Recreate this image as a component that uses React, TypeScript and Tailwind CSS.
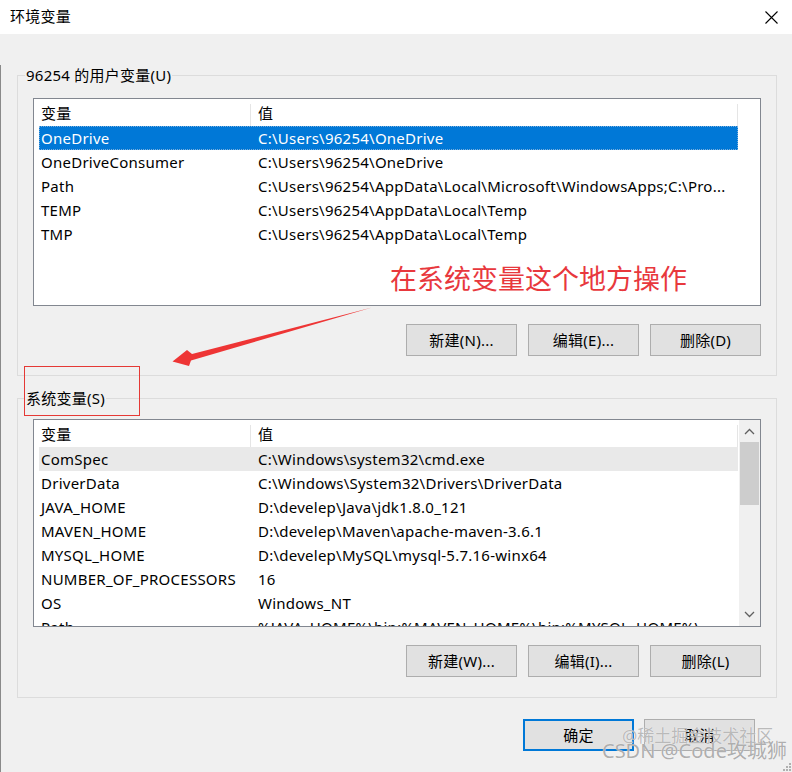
import React from "react";

const FONT = { fontFamily: "'Noto Sans', 'Noto Sans CJK SC', sans-serif" };

type Row = [string, string];

const userRows: Row[] = [
  ["OneDrive", "C:\\Users\\96254\\OneDrive"],
  ["OneDriveConsumer", "C:\\Users\\96254\\OneDrive"],
  ["Path", "C:\\Users\\96254\\AppData\\Local\\Microsoft\\WindowsApps;C:\\Pro..."],
  ["TEMP", "C:\\Users\\96254\\AppData\\Local\\Temp"],
  ["TMP", "C:\\Users\\96254\\AppData\\Local\\Temp"],
];

const sysRows: Row[] = [
  ["ComSpec", "C:\\Windows\\system32\\cmd.exe"],
  ["DriverData", "C:\\Windows\\System32\\Drivers\\DriverData"],
  ["JAVA_HOME", "D:\\develep\\Java\\jdk1.8.0_121"],
  ["MAVEN_HOME", "D:\\develep\\Maven\\apache-maven-3.6.1"],
  ["MYSQL_HOME", "D:\\develep\\MySQL\\mysql-5.7.16-winx64"],
  ["NUMBER_OF_PROCESSORS", "16"],
  ["OS", "Windows_NT"],
  ["Path", "%JAVA_HOME%\\bin;%MAVEN_HOME%\\bin;%MYSQL_HOME%\\..."],
];

function ListView({
  rows,
  selected,
  hovered,
  scrollbar,
}: {
  rows: Row[];
  selected?: number;
  hovered?: number;
  scrollbar?: boolean;
}) {
  return (
    <div className="flex h-[208px] border border-[#828790] bg-white overflow-hidden">
      <div className="flex-1 pl-[5px] pr-[1px] overflow-hidden">
        <div className="flex h-[27px] items-start pt-[5px] text-[15px] leading-[18px] text-black">
          <div className="w-[212px] h-[22px] shrink-0 border-r border-[#e5e5e5] pl-[2px]">变量</div>
          <div className="flex-1 h-[22px] border-r border-[#e5e5e5] pl-[7px]">值</div>
        </div>
        {rows.map((r, i) => {
          const sel = i === selected;
          const hov = i === hovered;
          return (
            <div
              key={i}
              className={
                "flex h-[24px] items-center text-[15px] whitespace-nowrap " +
                (sel
                  ? "bg-[#0078d7] text-white outline-1 outline-dotted outline-[#7aaedc] -outline-offset-1"
                  : hov
                  ? "bg-[#e9e9e9] text-black"
                  : "text-black")
              }
            >
              <div className="w-[212px] shrink-0 pl-[2px] overflow-hidden">{r[0]}</div>
              <div className="flex-1 pl-[7px] overflow-hidden">{r[1]}</div>
            </div>
          );
        })}
      </div>
      {scrollbar ? (
        <div className="w-[21px] shrink-0 bg-[#f0f0f0] flex flex-col items-center">
          <div className="h-[22px] w-full flex items-center justify-center">
            <svg width="11" height="7" viewBox="0 0 11 7">
              <path d="M1 6 L5.5 1.5 L10 6" fill="none" stroke="#606060" strokeWidth="1.3" />
            </svg>
          </div>
          <div className="w-[19px] h-[63px] bg-[#cdcdcd]" />
          <div className="flex-1" />
          <div className="h-[24px] w-full flex items-center justify-center">
            <svg width="11" height="7" viewBox="0 0 11 7">
              <path d="M1 1 L5.5 5.5 L10 1" fill="none" stroke="#606060" strokeWidth="1.3" />
            </svg>
          </div>
        </div>
      ) : (
        <div className="w-[21px] shrink-0" />
      )}
    </div>
  );
}

function Btn({ label, primary }: { label: string; primary?: boolean }) {
  return (
    <div
      className={
        "w-[111px] h-[32px] flex items-center justify-center text-[15px] text-black bg-[#e1e1e1] " +
        (primary ? "border-2 border-[#0078d7]" : "border border-[#adadad]")
      }
    >
      {label}
    </div>
  );
}

export default function App() {
  return (
    <div className="relative w-[792px] h-[772px] overflow-hidden bg-[#f0f0f0] tracking-[0.25px]" style={FONT}>
      {/* Title bar */}
      <div className="h-[34px] bg-white flex items-center justify-between pl-[10px] pr-[14px]">
        <span className="text-[15px] text-black leading-none pb-[1px]">环境变量</span>
        <svg width="13" height="13" viewBox="0 0 13 13">
          <path d="M0.5 0.5 L12.5 12.5 M12.5 0.5 L0.5 12.5" stroke="#000" strokeWidth="1.1" />
        </svg>
      </div>

      {/* Body */}
      <div className="h-[738px] border-l border-[#8a8a8a] pl-[16px] pr-[15px]">
        <fieldset className="mt-[31px] border border-[#dcdcdc] px-[15px] pb-[19px]">
          <legend className="-ml-[8px] px-[1px] text-[15px] leading-[20px] text-black">96254 的用户变量(U)</legend>
          <div className="mt-[13px]">
            <ListView rows={userRows} selected={0} />
          </div>
          <div className="mt-[18px] flex justify-end gap-[11px]">
            <Btn label="新建(N)..." />
            <Btn label="编辑(E)..." />
            <Btn label="删除(D)" />
          </div>
        </fieldset>

        <fieldset className="mt-[12px] border border-[#dcdcdc] px-[15px] pb-[20px]">
          <legend className="-ml-[8px] px-[1px] text-[15px] leading-[20px] text-black">系统变量(S)</legend>
          <div className="mt-[11px]">
            <ListView rows={sysRows} hovered={0} scrollbar />
          </div>
          <div className="mt-[18px] flex justify-end gap-[11px]">
            <Btn label="新建(W)..." />
            <Btn label="编辑(I)..." />
            <Btn label="删除(L)" />
          </div>
        </fieldset>

        <div className="mt-[21px] flex justify-end gap-[10px] pr-[22px]">
          <Btn label="确定" primary />
          <Btn label="取消" />
        </div>
      </div>

      {/* Annotations */}
      <div className="absolute left-[390px] top-[262px] text-[27px] leading-[34px] tracking-normal text-[#e8383d] whitespace-nowrap">
        在系统变量这个地方操作
      </div>
      <svg className="absolute left-0 top-0" width="792" height="772" viewBox="0 0 792 772">
        <polygon
          points="372,307.5 192,354 187,350 172.5,361.5 189,366 191,360.5"
          fill="#ee3535"
        />
      </svg>
      <div className="absolute left-[24px] top-[366px] w-[116px] h-[50px] border border-[#e53935]" />

      {/* Watermark */}
      <div className="absolute left-[622px] top-[725px] text-[17px] leading-[22px] tracking-normal text-[#a8a8a8]/80 whitespace-nowrap [text-shadow:0_0_1px_#fff]">
        @稀土掘金技术社区
      </div>
      <div className="absolute left-[602px] top-[739px] text-[20px] leading-[24px] tracking-normal text-[#999999]/80 whitespace-nowrap [text-shadow:0_0_1px_#fff]">
        CSDN @Code攻城狮
      </div>

      {/* Size grip */}
      <svg className="absolute right-0 bottom-0" width="12" height="12" viewBox="0 0 12 12">
        {[
          [9, 3],
          [9, 6],
          [6, 6],
          [9, 9],
          [6, 9],
          [3, 9],
        ].map(([x, y], i) => (
          <rect key={i} x={x} y={y} width="2" height="2" fill="#b0b0b0" />
        ))}
      </svg>
    </div>
  );
}
